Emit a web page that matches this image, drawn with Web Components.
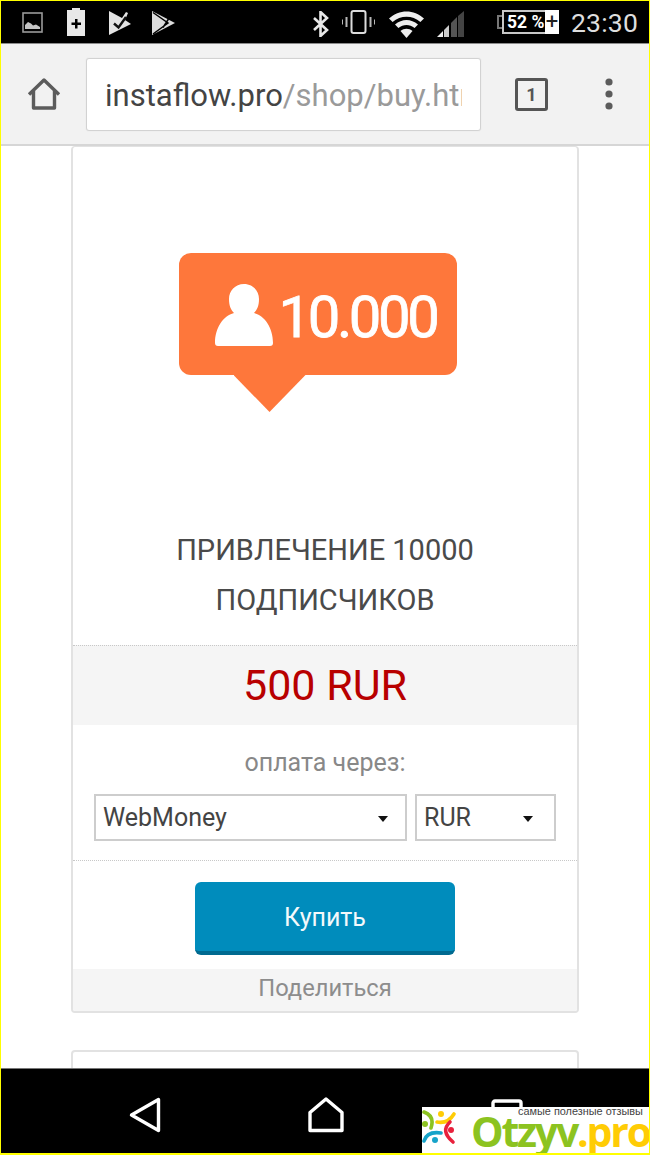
<!DOCTYPE html>
<html lang="ru">
<head>
<meta charset="utf-8">
<title>instaflow.pro</title>
<style>
    html, body { margin: 0; padding: 0; background: #fff; }
    body { font-family: "Roboto", "Liberation Sans", sans-serif; }
</style>
</head>
<body>
<phone-frame>
    <status-bar slot="status"></status-bar>
    <browser-bar slot="toolbar" host-name="instaflow.pro" path="/shop/buy.html" tabs="1"></browser-bar>

    <product-card>
        <follower-badge slot="picture" count="10.000"></follower-badge>
        <span slot="title">ПРИВЛЕЧЕНИЕ 10000<br>ПОДПИСЧИКОВ</span>
        <span slot="price">500 RUR</span>
        <span slot="pay-label">оплата через:</span>
        <fake-select slot="method" class="wide">WebMoney</fake-select>
        <fake-select slot="currency">RUR</fake-select>
        <span slot="buy">Купить</span>
        <span slot="share">Поделиться</span>
    </product-card>
    <empty-card></empty-card>

    <nav-bar slot="nav"></nav-bar>
    <otzyv-mark slot="overlay"></otzyv-mark>
</phone-frame>

<template id="phone-frame-tpl">
<style>
    :host {
        display: flex;
        flex-direction: column;
        box-sizing: border-box;
        position: relative;
        width: 650px;
        height: 1155px;
        overflow: hidden;
        border: 1px solid #ffff00;
        border-bottom-width: 2px;
        background: #fff;
    }
    #content {
        flex: 1;
        min-height: 0;
        overflow: hidden;
        padding: 0 70px 0 70px;
        display: flex;
        flex-direction: column;
        gap: 37px;
    }
</style>
<slot name="status"></slot>
<slot name="toolbar"></slot>
<div id="content"><slot></slot></div>
<slot name="nav"></slot>
<slot name="overlay"></slot>
</template>

<template id="status-bar-tpl">
<style>
    :host {
        display: flex;
        align-items: flex-start;
        box-sizing: border-box;
        flex: none;
        height: 43px;
        background: #000;
        border-bottom: 1px solid #8c8c8c;
        color: #e4e4e4;
    }
    svg { display: block; flex: none; }
    #time {
        font: 400 26.5px/1 "Roboto", sans-serif;
        color: #dedede;
        margin: 9px 0 0 12px;
        letter-spacing: 0.2px;
    }
    #battery {
        box-sizing: border-box;
        flex: none;
        width: 62px;
        height: 24px;
        margin: 9px 0 0 33px;
        display: flex;
    }
    #battery .nub {
        box-sizing: border-box;
        flex: none;
        width: 5px;
        height: 14px;
        margin-top: 5px;
        border: 2px solid #777;
        border-right: none;
    }
    #battery .level {
        flex: none;
        width: 43px;
        box-sizing: border-box;
        border: 2px solid #c8c8c8;
        border-right: none;
        background: #000;
        color: #fff;
        font: 700 17.5px/20px "Roboto", sans-serif;
        padding-left: 3px;
        white-space: nowrap;
    }
    #battery .plug {
        flex: 1;
        background: #fff;
        color: #222;
        font: 400 22px/24px "Roboto", sans-serif;
        text-align: center;
    }
</style>
<svg width="21" height="21" viewBox="0 0 21 21" style="margin:11px 0 0 21px">
    <rect x="1" y="1" width="19" height="19" fill="none" stroke="#9a9a9a" stroke-width="1.6"/>
    <path d="M3 17v-4l3-3 3 1.500 2 2 3-1 4 2.500v2z" fill="#c4c4c4"/>
</svg>
<svg width="18" height="28" viewBox="0 0 18 28" style="margin:7px 0 0 24px">
    <path d="M5 0h8v2h5v26H0V2h5z" fill="#e8e8e8"/>
    <path d="M8 11h2.500v3.500H14V17h-3.500v3.500H8V17H4.500v-2.500H8z" fill="#000"/>
</svg>
<svg width="22" height="24" viewBox="0 0 22 24" style="margin:10px 0 0 24px">
    <path d="M0 0L13 7l4-6 2 1-3 7 6 4L0 24z" fill="#e4e4e4"/>
    <path d="M5 12.500l4.500 4L17 6" fill="none" stroke="#111" stroke-width="2.400"/>
</svg>
<svg width="23" height="24" viewBox="0 0 23 24" style="margin:10px 0 0 21px">
    <path d="M0 0l23 12L0 24z" fill="#dcdcdc"/>
    <path d="M1 1.500L16 12 1 23M11 16.500L16.500 8" fill="none" stroke="#000" stroke-width="1.500"/>
    <path d="M5 0.500L22 10" stroke="#000" stroke-width="1" fill="none" opacity=".6"/>
</svg>
<svg width="18" height="26" viewBox="0 0 18 26" style="margin:10px 0 0 137px">
    <path d="M2 7l13 12-6.500 6V1L15 7 2 19" fill="none" stroke="#e8e8e8" stroke-width="2.600"/>
</svg>
<svg width="33" height="24" viewBox="0 0 33 24" style="margin:9px 0 0 12px">
    <rect x="9.500" y="1" width="14" height="22" rx="2" fill="none" stroke="#dcdcdc" stroke-width="2"/>
    <path d="M4.500 7v10M0 9.500v5M28.500 7v10M33 9.500v5" stroke="#b8b8b8" stroke-width="2"/>
</svg>
<svg width="35" height="28" viewBox="0 0 35 28" style="margin:9px 0 0 14px">
    <path d="M0 8.500C10-1 25-1 35 8.500l-3.600 3.600C23.500 5 11.500 5 3.600 12.100z" fill="#eee"/>
    <path d="M6 14.500c7-6 16-6 23 0l-3.400 3.400c-5-4-11.200-4-16.200 0z" fill="#eee"/>
    <path d="M17.500 28l-6-7c3.500-3 8.500-3 12 0z" fill="#eee"/>
</svg>
<svg width="27" height="26" viewBox="0 0 27 26" style="margin:10px 0 0 13px">
    <path d="M0 26L6 20v6z" fill="#eee"/>
    <path d="M7 19l5-5v12H7z" fill="#ccc"/>
    <path d="M14 12l6-6v20h-6z" fill="#555"/>
    <path d="M21 5l6-5v26h-6z" fill="#444"/>
</svg>
<div id="battery">
    <div class="nub"></div>
    <div class="level">52 %</div>
    <div class="plug">+</div>
</div>
<div id="time">23:30</div>
</template>

<template id="browser-bar-tpl">
<style>
    :host {
        display: flex;
        align-items: center;
        box-sizing: border-box;
        flex: none;
        height: 102px;
        background: #f2f2f2;
        border-bottom: 2px solid #d6d6d6;
    }
    svg { display: block; flex: none; }
    #url {
        box-sizing: border-box;
        flex: none;
        width: 393px;
        height: 71px;
        margin-left: 26px;
        padding: 0 18px 0 18px;
        background: #fff;
        border-radius: 2px;
        box-shadow: 0 0 1px 1px #cfcfcf;
        font: 400 31px/73px "Roboto", sans-serif;
        white-space: nowrap;
        overflow: hidden;
        color: #9a9a9a;
    }
    #url b { font-weight: 400; color: #444; }
    #url div { overflow: hidden; }
    #tabs {
        box-sizing: border-box;
        flex: none;
        width: 33px;
        height: 33px;
        margin-left: 35px;
        border: 3px solid #555;
        border-radius: 3px;
        color: #555;
        font: 700 18px/27px "Roboto", sans-serif;
        text-align: center;
    }
    #more { margin-left: 57px; }
</style>
<svg width="34" height="34" viewBox="0 0 34 34" style="margin-left:26px">
    <path d="M2 17.500L17 3l15 14.500M6.500 13.500V31h21V13.500" fill="none" stroke="#5c5c5c" stroke-width="3.400" stroke-linejoin="round"/>
</svg>
<div id="url"><div><b id="host"></b><span id="path"></span></div></div>
<div id="tabs"></div>
<svg id="more" width="8" height="32" viewBox="0 0 8 32">
    <circle cx="4" cy="4" r="3.600" fill="#5c5c5c"/>
    <circle cx="4" cy="16" r="3.600" fill="#5c5c5c"/>
    <circle cx="4" cy="28" r="3.600" fill="#5c5c5c"/>
</svg>
</template>

<template id="product-card-tpl">
<style>
    :host {
        display: block;
        box-sizing: border-box;
        flex: none;
        width: 508px;
        height: 867px;
        background: #fff;
        border: 2px solid #e2e2e2;
        border-top-width: 1px;
        border-radius: 4px;
        color: #444;
        overflow: hidden;
    }
    #picture-inner {
        padding: 106px 15px 0 0;
        height: 275px;
        box-sizing: border-box;
        display: flex;
        justify-content: center;
    }
    #title {
        text-align: center;
        font: 400 29px/50px "Roboto", sans-serif;
        color: #4a4a4a;
        margin-top: 103px;
        box-sizing: border-box;
        height: 120px;
    }
    #price {
        height: 80px;
        background: #f5f5f5;
        border-top: 1px dotted #c8c8c8;
        box-sizing: border-box;
        text-align: center;
        font: 400 43px/79px "Roboto", sans-serif;
        color: #b80000;
    }
    #pay-label {
        text-align: center;
        font: 400 25px/30px "Roboto", sans-serif;
        color: #888;
        padding-top: 23px;
    }
    #selects {
        display: flex;
        gap: 8px;
        padding: 16px 21px 19px 21px;
        border-bottom: 1px dotted #c8c8c8;
    }
    #buy-row {
        display: flex;
        justify-content: center;
        padding-top: 21px;
        height: 108px;
        box-sizing: border-box;
    }
    #buy {
        box-sizing: border-box;
        width: 260px;
        height: 73px;
        background: #008cbc;
        border-bottom: 4px solid #006a90;
        border-radius: 6px;
        color: #f4f9fb;
        font: 400 25px/72px "Roboto", sans-serif;
        text-align: center;
    }
    #share {
        text-align: center;
        background: #f5f5f5;
        font: 400 23.7px/38px "Roboto", sans-serif;
        color: #8d8d8d;
        height: 42px;
    }
</style>
<div id="picture-inner"><slot name="picture"></slot></div>
<div id="title"><slot name="title"></slot></div>
<div id="price"><slot name="price"></slot></div>
<div id="pay-label"><slot name="pay-label"></slot></div>
<div id="selects"><slot name="method"></slot><slot name="currency"></slot></div>
<div id="buy-row"><div id="buy"><slot name="buy"></slot></div></div>
<div id="share"><slot name="share"></slot></div>
</template>

<template id="follower-badge-tpl">
<style>
    :host {
        display: block;
        position: relative;
        box-sizing: border-box;
        width: 278px;
        height: 122px;
        background: #fe773b;
        border-radius: 12px;
    }
    #row {
        display: flex;
        align-items: flex-end;
        height: 100%;
        box-sizing: border-box;
        padding: 0 0 29px 36px;
    }
    svg { display: block; flex: none; }
    #count {
        font: 400 58px/1 "Roboto", sans-serif;
        color: #fff;
        letter-spacing: -3.4px;
        -webkit-text-stroke: 0.8px #fff;
        margin: 0 0 0 6px;
    }
    /* speech bubble tip */
    #tip {
        position: absolute;
        left: 55px;
        top: 122px;
        width: 72px;
        height: 37px;
        background: #fe773b;
        clip-path: polygon(0 0, 100% 0, 50% 100%);
    }
</style>
<div id="row">
    <svg width="58" height="62" viewBox="0 0 58 62">
        <path d="M29 0c9 0 15 7 15 15 0 7-2 11-5 14 11 3 19 15 19 30 0 2-1 3-3 3H3c-2 0-3-1-3-3C0 44 8 32 19 29c-3-3-5-7-5-14C14 7 20 0 29 0z" fill="#fff"/>
    </svg>
    <div id="count"></div>
</div>
<div id="tip"></div>
</template>

<template id="fake-select-tpl">
<style>
    :host {
        display: flex;
        align-items: center;
        justify-content: space-between;
        box-sizing: border-box;
        width: 141px;
        height: 47px;
        border: 2px solid #cdcdcd;
        padding: 0 21px 0 7px;
        font: 400 25px/1 "Roboto", sans-serif;
        color: #444;
    }
    :host(.wide) { width: 313px; padding-right: 17px; }
    i {
        width: 0;
        height: 0;
        border-left: 5px solid transparent;
        border-right: 5px solid transparent;
        border-top: 6px solid #111;
        margin-top: 2px;
    }
</style>
<slot></slot><i></i>
</template>

<template id="empty-card-tpl">
<style>
    :host {
        display: block;
        box-sizing: border-box;
        flex: none;
        width: 508px;
        height: 60px;
        background: #fff;
        border: 2px solid #e2e2e2;
        border-radius: 4px;
    }
</style>
</template>

<template id="nav-bar-tpl">
<style>
    :host {
        display: flex;
        align-items: flex-start;
        box-sizing: border-box;
        flex: none;
        height: 85px;
        background: #000;
        border-top: 1px solid #777;
    }
    svg { display: block; flex: none; }
</style>
<svg width="32" height="36" viewBox="0 0 32 36" style="margin:28px 0 0 128px">
    <path d="M29.500 2.500v31L2.500 18z" fill="none" stroke="#fff" stroke-width="3.400" stroke-linejoin="round"/>
</svg>
<svg width="36" height="36" viewBox="0 0 36 36" style="margin:28px 0 0 147px">
    <path d="M18 2L34 15.500V33.500H2V15.500z" fill="none" stroke="#fff" stroke-width="3.400" stroke-linejoin="round"/>
</svg>
<svg width="32" height="36" viewBox="0 0 32 36" style="margin:30px 0 0 147px">
    <rect x="2" y="2" width="28" height="32" rx="2" fill="none" stroke="#fff" stroke-width="3.400"/>
</svg>
</template>

<template id="otzyv-mark-tpl">
<style>
    :host {
        position: absolute;
        right: 0;
        bottom: 0;
        width: 227px;
        height: 46px;
        background: #fff;
    }
    svg { position: absolute; left: 0; top: 0; }
    #tag {
        position: absolute;
        left: 96px;
        top: 0;
        font: 400 10.9px/9px "Liberation Sans", sans-serif;
        color: #444;
        white-space: nowrap;
    }
    #name {
        position: absolute;
        left: 49px;
        top: 9px;
        font: 700 41px/30px "Open Sans", "Liberation Sans", sans-serif;
        letter-spacing: -2.2px;
        white-space: nowrap;
        color: #8cc320;
    }
    #name span { color: #ffcc05; }
</style>
<svg width="36" height="40" viewBox="0 0 36 40">
    <g fill="none" stroke-width="3.600" stroke-linecap="round">
        <path d="M2 5Q13 9 9 21" stroke="#8cc320"/>
        <path d="M15 15Q26 17 32 7" stroke="#ffcc05"/>
        <path d="M2 34Q5 24 19 26" stroke="#16a3c9"/>
        <path d="M28 15Q18 24 31 35" stroke="#e8213c"/>
    </g>
    <circle cx="3" cy="17" r="3" fill="#8cc320"/>
    <circle cx="19" cy="7" r="3" fill="#ffcc05"/>
    <circle cx="13" cy="33" r="3" fill="#16a3c9"/>
    <circle cx="29" cy="23" r="3" fill="#e8213c"/>
</svg>
<div id="tag">самые полезные отзывы</div>
<div id="name">Otzyv<span>.pro</span></div>
</template>

<script>
    // Simple helper, all the elements here just clone their template
    class TemplateElement extends HTMLElement {
        constructor() {
            super();
            this.shadow = this.attachShadow({ mode: "open" });
            var tpl = document.getElementById(this.tagName.toLowerCase() + "-tpl");
            this.shadow.appendChild(tpl.content.cloneNode(true));
        }
    }

    class BrowserBar extends TemplateElement {
        connectedCallback() {
            this.shadow.querySelector("#host").textContent = this.getAttribute("host-name");
            this.shadow.querySelector("#path").textContent = this.getAttribute("path");
            this.shadow.querySelector("#tabs").textContent = this.getAttribute("tabs");
        }
    }

    class FollowerBadge extends TemplateElement {
        connectedCallback() {
            this.shadow.querySelector("#count").textContent = this.getAttribute("count");
        }
    }

    customElements.define("phone-frame", class extends TemplateElement {});
    customElements.define("status-bar", class extends TemplateElement {});
    customElements.define("browser-bar", BrowserBar);
    customElements.define("product-card", class extends TemplateElement {});
    customElements.define("follower-badge", FollowerBadge);
    customElements.define("fake-select", class extends TemplateElement {});
    customElements.define("empty-card", class extends TemplateElement {});
    customElements.define("nav-bar", class extends TemplateElement {});
    customElements.define("otzyv-mark", class extends TemplateElement {});
</script>
</body>
</html>
